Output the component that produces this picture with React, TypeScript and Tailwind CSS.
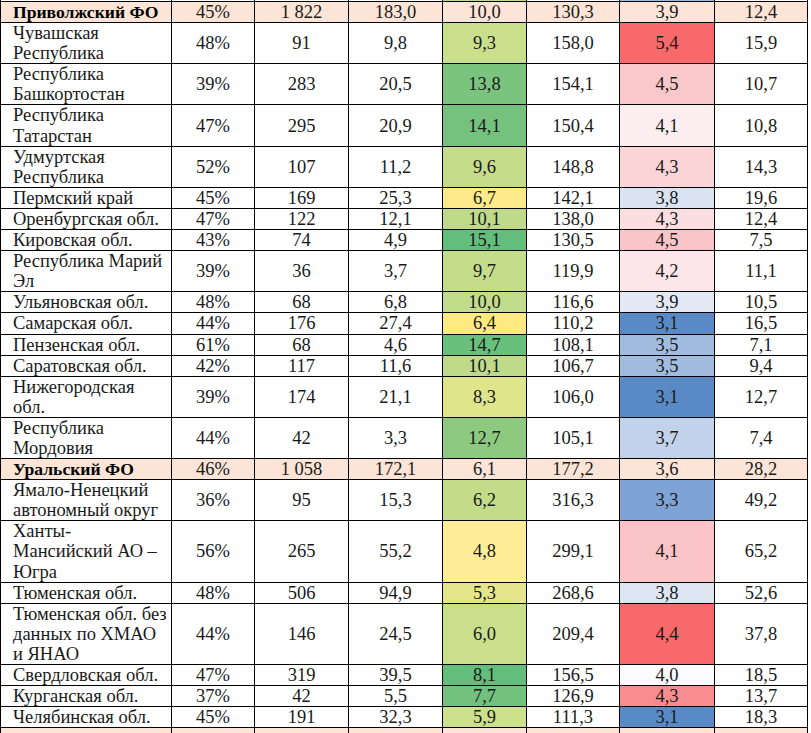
type Row = {
  name: string[];
  values: string[];
  header?: boolean;
  c5?: string;
  c7?: string;
};

const HEADER_BG = "#fce4d6";

const rows: Row[] = [
  { name: ["Приволжский ФО"], header: true, values: ["45%", "1 822", "183,0", "10,0", "130,3", "3,9", "12,4"] },
  { name: ["Чувашская", "Республика"], values: ["48%", "91", "9,8", "9,3", "158,0", "5,4", "15,9"], c5: "#c9df8b", c7: "#f8696b" },
  { name: ["Республика", "Башкортостан"], values: ["39%", "283", "20,5", "13,8", "154,1", "4,5", "10,7"], c5: "#7ac47f", c7: "#f9c8cb" },
  { name: ["Республика", "Татарстан"], values: ["47%", "295", "20,9", "14,1", "150,4", "4,1", "10,8"], c5: "#74c27d", c7: "#fcedf0" },
  { name: ["Удмуртская", "Республика"], values: ["52%", "107", "11,2", "9,6", "148,8", "4,3", "14,3"], c5: "#c5dd8a", c7: "#fad4d7" },
  { name: ["Пермский край"], values: ["45%", "169", "25,3", "6,7", "142,1", "3,8", "19,6"], c5: "#feea8a", c7: "#d9e3f1" },
  { name: ["Оренбургская обл."], values: ["47%", "122", "12,1", "10,1", "138,0", "4,3", "12,4"], c5: "#bfdb8a", c7: "#fbdee1" },
  { name: ["Кировская обл."], values: ["43%", "74", "4,9", "15,1", "130,5", "4,5", "7,5"], c5: "#63be7b", c7: "#f9c5c8" },
  { name: ["Республика Марий", "Эл"], values: ["39%", "36", "3,7", "9,7", "119,9", "4,2", "11,1"], c5: "#c4dd8a", c7: "#fce6e9" },
  { name: ["Ульяновская обл."], values: ["48%", "68", "6,8", "10,0", "116,6", "3,9", "10,5"], c5: "#c1dc8a", c7: "#e3e9f4" },
  { name: ["Самарская обл."], values: ["44%", "176", "27,4", "6,4", "110,2", "3,1", "16,5"], c5: "#fee983", c7: "#5a8ac6" },
  { name: ["Пензенская обл."], values: ["61%", "68", "4,6", "14,7", "108,1", "3,5", "7,1"], c5: "#69c07c", c7: "#a2bce0" },
  { name: ["Саратовская обл."], values: ["42%", "117", "11,6", "10,1", "106,7", "3,5", "9,4"], c5: "#bfdb8a", c7: "#a2bce0" },
  { name: ["Нижегородская", "обл."], values: ["39%", "174", "21,1", "8,3", "106,0", "3,1", "12,7"], c5: "#dee58a", c7: "#5a8ac6" },
  { name: ["Республика", "Мордовия"], values: ["44%", "42", "3,3", "12,7", "105,1", "3,7", "7,4"], c5: "#8dca80", c7: "#c2d2ea" },
  { name: ["Уральский ФО"], header: true, values: ["46%", "1 058", "172,1", "6,1", "177,2", "3,6", "28,2"] },
  { name: ["Ямало-Ненецкий", "автономный округ"], values: ["36%", "95", "15,3", "6,2", "316,3", "3,3", "49,2"], c5: "#c2dc8a", c7: "#7fa3d4" },
  { name: ["Ханты-", "Мансийский АО –", "Югра"], values: ["56%", "265", "55,2", "4,8", "299,1", "4,1", "65,2"], c5: "#ffec97", c7: "#f9c3c7" },
  { name: ["Тюменская обл."], values: ["48%", "506", "94,9", "5,3", "268,6", "3,8", "52,6"], c5: "#e5e68b", c7: "#dce5f2" },
  { name: ["Тюменская обл. без", "данных по ХМАО", "и ЯНАО"], values: ["44%", "146", "24,5", "6,0", "209,4", "4,4", "37,8"], c5: "#c9df8b", c7: "#f8696b" },
  { name: ["Свердловская обл."], values: ["47%", "319", "39,5", "8,1", "156,5", "4,0", "18,5"], c5: "#63be7b", c7: "#fbfbfe" },
  { name: ["Курганская обл."], values: ["37%", "42", "5,5", "7,7", "126,9", "4,3", "13,7"], c5: "#72c27d", c7: "#f98c8e" },
  { name: ["Челябинская обл."], values: ["45%", "191", "32,3", "5,9", "111,3", "3,1", "18,3"], c5: "#cde08b", c7: "#5a8ac6" },
];

const widths = [171, 83, 94, 94, 84, 93, 95, 93];

function bgFor(row: Row, i: number) {
  if (row.header) return HEADER_BG;
  if (i === 3) return row.c5;
  if (i === 5) return row.c7;
  return undefined;
}

export default function App() {
  return (
    <div className="h-[733px] w-[811px] overflow-hidden bg-white font-['Liberation_Serif','Times_New_Roman',serif]">
      <table className="-mt-[19px] w-[807px] table-fixed border-collapse font-['Liberation_Serif','Times_New_Roman',serif] text-[18.5px] leading-[20.1px] text-[#1a1a1a]">
        <colgroup>
          {widths.map((w, i) => (
            <col key={i} style={{ width: w }} />
          ))}
        </colgroup>
        <tbody>
          {/* tail of the row above the visible part */}
          <tr>
            <td className="h-[20px] border border-black p-0" />
            <td className="border border-black p-0" />
            <td className="border border-black p-0" />
            <td className="border border-black p-0" />
            <td className="border border-black bg-[#c3dc8a] p-0" />
            <td className="border border-black p-0" />
            <td className="border border-black bg-[#9fbbdf] p-0" />
            <td className="border border-black p-0" />
          </tr>
          {rows.map((row) => (
            <tr key={row.name.join(" ")} className={row.header ? "bg-[#fce4d6]" : ""}>
              <td
                className={`border border-black py-0 pr-1 pl-[12px] align-middle ${
                  row.header ? "text-[17.6px] font-bold text-black" : ""
                }`}
              >
                {row.name.map((line) => (
                  <div key={line} className="whitespace-nowrap">
                    {line}
                  </div>
                ))}
              </td>
              {row.values.map((v, i) => (
                <td
                  key={i}
                  className="border border-black p-0 text-center align-middle whitespace-nowrap"
                  style={{ backgroundColor: bgFor(row, i) }}
                >
                  {v}
                </td>
              ))}
            </tr>
          ))}
          {/* start of the next district, cut off by the bottom edge */}
          <tr className="bg-[#fce4d6]">
            {widths.map((_, i) => (
              <td key={i} className="h-[20px] border border-black p-0" />
            ))}
          </tr>
        </tbody>
      </table>
    </div>
  );
}
